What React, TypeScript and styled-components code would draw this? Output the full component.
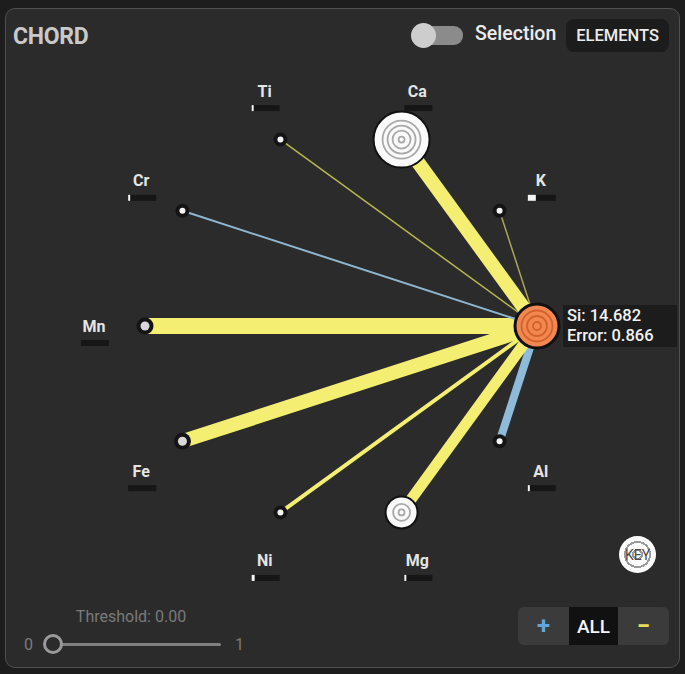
import React from 'react';
import styled, { createGlobalStyle } from 'styled-components';

const GlobalStyle = createGlobalStyle`
  body {
    margin: 0;
    background: #1d1d1d;
    font-family: Roboto, "Liberation Sans", sans-serif;
  }
`;

const Page = styled.div`
  padding: 8px 5px 6px 5px;
`;

const Panel = styled.div`
  box-sizing: border-box;
  width: 675px;
  height: 660px;
  background: #2b2b2b;
  border: 1px solid #505050;
  border-radius: 10px;
  display: flex;
  flex-direction: column;
  overflow: hidden;
`;

const Header = styled.div`
  height: 52px;
  display: flex;
  align-items: center;
  padding: 0 10px 0 7px;
`;

const Title = styled.div`
  font-size: 23px;
  font-weight: 700;
  color: #c9c9c9;
  letter-spacing: -0.3px;
  flex: 1;
  margin-top: 2px;
`;

const Toggle = styled.div`
  position: relative;
  width: 52px;
  height: 24px;
  display: flex;
  align-items: center;
  margin-right: 12px;
`;

const ToggleTrack = styled.div`
  width: 44px;
  height: 19px;
  margin-left: 8px;
  border-radius: 9px;
  background: #8b8b8b;
`;

const ToggleThumb = styled.div`
  position: absolute;
  left: 0;
  top: 0;
  width: 25px;
  height: 25px;
  border-radius: 50%;
  background: #cdcdcd;
`;

const ToggleLabel = styled.div`
  font-size: 19.5px;
  font-weight: 500;
  color: #ececec;
  margin-right: 10px;
  margin-bottom: 4px;
`;

const ElementsButton = styled.button`
  height: 33px;
  padding: 0 10px;
  border: none;
  border-radius: 8px;
  background: #1c1c1c;
  color: #ececec;
  font-family: inherit;
  font-size: 16.5px;
  font-weight: 500;
`;

const Chart = styled.div`
  position: relative;
  height: 535px;
`;

const Tooltip = styled.div`
  position: absolute;
  left: 557px;
  top: 244px;
  width: 114px;
  height: 42px;
  box-sizing: border-box;
  padding: 1px 0 0 4px;
  background: #1c1c1c;
  color: #f2f2f2;
  font-size: 16.5px;
  font-weight: 500;
  line-height: 20px;
`;

const KeyButton = styled.button`
  position: absolute;
  left: 613px;
  top: 475px;
  width: 37px;
  height: 37px;
  padding: 0;
  border: none;
  border-radius: 50%;
  background: repeating-radial-gradient(circle, #ffffff 0 3.5px, #9c9c9c 3.5px 5.5px, #ffffff 5.5px 8px);
  color: #4a4a4a;
  font-family: inherit;
  font-size: 14px;
  display: flex;
  align-items: center;
  justify-content: center;
`;

const Footer = styled.div`
  flex: 1;
  display: flex;
  justify-content: space-between;
  align-items: flex-end;
  padding: 0 10px 22px 18px;
`;

const Threshold = styled.div`
  display: flex;
  flex-direction: column;
  align-items: center;
  gap: 8px;
  margin-bottom: -9px;
`;

const ThresholdLabel = styled.div`
  font-size: 16px;
  color: #7a7a7a;
  margin-right: 6px;
`;

const SliderRow = styled.div`
  display: flex;
  align-items: center;
  gap: 10px;
  color: #7a7a7a;
  font-size: 16px;
`;

const Track = styled.div`
  position: relative;
  width: 182px;
  height: 20px;
  display: flex;
  align-items: center;
`;

const TrackLine = styled.div`
  margin-left: 12px;
  width: 166px;
  height: 3px;
  background: #808080;
  border-radius: 2px;
`;

const Thumb = styled.div`
  position: absolute;
  left: 0;
  top: 0;
  box-sizing: border-box;
  width: 20px;
  height: 20px;
  border-radius: 50%;
  border: 3px solid #9a9a9a;
  background: #2b2b2b;
`;

const Group = styled.div`
  display: flex;
  height: 38px;
  border-radius: 6px;
  background: #3b3b3b;
  overflow: hidden;
`;

const GroupButton = styled.button<{ $tone: string; $active?: boolean }>`
  width: ${p => (p.$active ? 49 : 51)}px;
  border: none;
  padding: 0;
  background: ${p => (p.$active ? '#111111' : 'transparent')};
  color: ${p => p.$tone};
  font-family: inherit;
  font-size: ${p => (p.$active ? 19 : 24)}px;
  font-weight: ${p => (p.$active ? 500 : 700)};
`;

type Node = { name: string; fill: number; line: string; width: number };

const nodes: Node[] = [
  { name: 'Si', fill: 0, line: '', width: 0 },
  { name: 'Al', fill: 2, line: '#8fbbdb', width: 8 },
  { name: 'Mg', fill: 2, line: '#f4ef72', width: 11 },
  { name: 'Ni', fill: 3, line: '#f4ef72', width: 4 },
  { name: 'Fe', fill: 0, line: '#f4ef72', width: 14 },
  { name: 'Mn', fill: 0, line: '#f4ef72', width: 16 },
  { name: 'Cr', fill: 2, line: '#8fb5cf', width: 2 },
  { name: 'Ti', fill: 2, line: '#b9b84c', width: 1.5 },
  { name: 'Ca', fill: 0, line: '#f4ef72', width: 14 },
  { name: 'K', fill: 8, line: '#a8a657', width: 1.5 },
];

const CX = 341;
const CY = 326;
const R = 196;
const LR = 247;

const pos = (i: number, r: number) => {
  const a = (i * 36 * Math.PI) / 180;
  return { x: CX + r * Math.cos(a), y: CY + r * Math.sin(a) };
};

function Rings({ x, y, r, fill, ring, radii, stroke }: { x: number; y: number; r: number; fill: string; ring: string; radii: number[]; stroke: number }) {
  return (
    <g>
      <circle cx={x} cy={y} r={r} fill={fill} stroke="#111" strokeWidth={stroke} />
      {radii.map(rr => (
        <circle key={rr} cx={x} cy={y} r={rr} fill="none" stroke={ring} strokeWidth={1.8} />
      ))}
    </g>
  );
}

function ChordDiagram() {
  const si = pos(0, R);
  return (
    <svg width="673" height="535" viewBox="6 61 673 535" style={{ display: 'block' }}>
      {nodes.slice(1).map((n, k) => {
        const p = pos(k + 1, R);
        return <line key={n.name} x1={p.x} y1={p.y} x2={si.x} y2={si.y} stroke={n.line} strokeWidth={n.width} />;
      })}
      {nodes.map((n, i) => {
        const l = pos(i, LR);
        if (n.name === 'Si') return null;
        return (
          <g key={n.name}>
            <text x={l.x} y={l.y} textAnchor="middle" dominantBaseline="central" fill="#e4e4e4" fontSize="16" fontWeight="700" fontFamily="Roboto, sans-serif">
              {n.name}
            </text>
            <rect x={l.x - 13} y={l.y + 14} width={28} height={6} fill="#161616" />
            {n.fill > 0 && <rect x={l.x - 13} y={l.y + 14} width={n.fill} height={6} fill="#f4f4f4" />}
          </g>
        );
      })}
      {nodes.map((n, i) => {
        const p = pos(i, R);
        if (n.name === 'Si' || n.name === 'Ca' || n.name === 'Mg') return null;
        const big = n.name === 'Mn' || n.name === 'Fe';
        return (
          <g key={n.name}>
            <circle cx={p.x} cy={p.y} r={big ? 8.5 : 7} fill="#141414" />
            <circle cx={p.x} cy={p.y} r={big ? 4.5 : 3} fill={big ? '#d8d8d8' : '#f4f4f4'} />
          </g>
        );
      })}
      <Rings x={pos(8, R).x} y={pos(8, R).y} r={28} fill="#fbfbfb" ring="#a9a9a9" radii={[3, 9, 14, 19]} stroke={2} />
      <Rings x={pos(2, R).x} y={pos(2, R).y} r={16} fill="#fbfbfb" ring="#a9a9a9" radii={[3, 8.5]} stroke={2} />
      <Rings x={si.x} y={si.y} r={22} fill="#f2884f" ring="#d4602f" radii={[4, 10, 15.5]} stroke={3} />
    </svg>
  );
}

export default function App() {
  return (
    <>
      <GlobalStyle />
      <Page>
        <Panel>
          <Header>
            <Title>CHORD</Title>
            <Toggle>
              <ToggleTrack />
              <ToggleThumb />
            </Toggle>
            <ToggleLabel>Selection</ToggleLabel>
            <ElementsButton>ELEMENTS</ElementsButton>
          </Header>
          <Chart>
            <ChordDiagram />
            <Tooltip>
              Si: 14.682
              <br />
              Error: 0.866
            </Tooltip>
            <KeyButton>KEY</KeyButton>
          </Chart>
          <Footer>
            <Threshold>
              <ThresholdLabel>Threshold: 0.00</ThresholdLabel>
              <SliderRow>
                <span>0</span>
                <Track>
                  <TrackLine />
                  <Thumb />
                </Track>
                <span>1</span>
              </SliderRow>
            </Threshold>
            <Group>
              <GroupButton $tone="#64a6dc">+</GroupButton>
              <GroupButton $tone="#f5f5f5" $active>ALL</GroupButton>
              <GroupButton $tone="#e6dd55">−</GroupButton>
            </Group>
          </Footer>
        </Panel>
      </Page>
    </>
  );
}
